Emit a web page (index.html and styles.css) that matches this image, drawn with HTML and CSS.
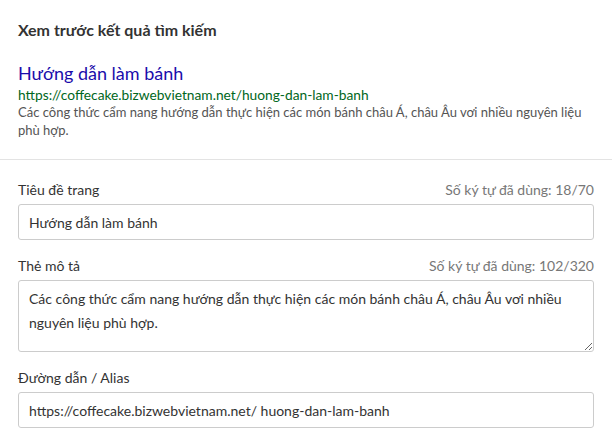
FILE: index.html
```html
<!DOCTYPE html>
<html lang="vi">
<head>
    <meta charset="UTF-8">
    <meta name="viewport" content="width=device-width, initial-scale=1.0">
    <title>SEO</title>
    <link rel="stylesheet" href="styles.css">
</head>
<body>
    <!-- Xem trước kết quả -->
    <div class="preview">
        <h3 class="preview-title">Xem trước kết quả tìm kiếm</h3>
        <div class="snippet">
            <div class="snippet-title">Hướng dẫn làm bánh</div>
            <div class="snippet-url">https://coffecake.bizwebvietnam.net/huong-dan-lam-banh</div>
            <div class="snippet-desc">Các công thức cẩm nang hướng dẫn thực hiện các món bánh châu Á, châu Âu vơi nhiều nguyên liệu phù hợp.</div>
        </div>
    </div>

    <div class="form">
        <div class="field">
            <div class="field-head">
                <label for="seoTitle">Tiêu đề trang</label>
                <span class="counter">Số ký tự đã dùng: 18/70</span>
            </div>
            <input type="text" id="seoTitle" class="input" value="Hướng dẫn làm bánh">
        </div>

        <div class="field">
            <div class="field-head">
                <label for="seoDesc">Thẻ mô tả</label>
                <span class="counter">Số ký tự đã dùng: 102/320</span>
            </div>
            <textarea id="seoDesc" class="input textarea">Các công thức cẩm nang hướng dẫn thực hiện các món bánh châu Á, châu Âu vơi nhiều nguyên liệu phù hợp.</textarea>
        </div>

        <div class="field">
            <div class="field-head">
                <label for="seoAlias">Đường dẫn / Alias</label>
            </div>
            <input type="text" id="seoAlias" class="input" value="https://coffecake.bizwebvietnam.net/ huong-dan-lam-banh">
        </div>
    </div>
</body>
</html>
```

FILE: styles.css
```css
body {
    font-family: Lato, "Open Sans", Arial, sans-serif;
    color: #333;
    background: #fff;
    margin: 0;
}

.preview {
    padding: 20px 18px 20px;
    border-bottom: 1px solid #e3e3e3;
}

.preview-title {
    margin: 0 0 20px;
    font-size: 16px;
    line-height: 20px;
    font-weight: 700;
    color: #333;
}

.snippet-title {
    font-size: 18px;
    line-height: 26px;
    color: #1a0dab;
}

.snippet-url {
    font-size: 13.75px;
    line-height: 17px;
    color: #006621;
}

.snippet-desc {
    font-size: 13px;
    line-height: 18px;
    color: #545454;
}

.form {
    padding: 20px 18px 0;
}

.field {
    margin-bottom: 16px;
}

.field-head {
    display: flex;
    justify-content: space-between;
    margin-bottom: 4px;
    font-size: 14px;
    line-height: 20px;
}

.counter {
    color: #777;
}

.input {
    display: block;
    box-sizing: border-box;
    width: 100%;
    height: 36px;
    margin: 0;
    padding: 0 10px;
    border: 1px solid #ccc;
    border-radius: 3px;
    font-family: inherit;
    font-size: 14px;
    color: #333;
    background: #fff;
}

.textarea {
    height: 72px;
    padding: 6px 10px;
    line-height: 24px;
    resize: vertical;
}
```
